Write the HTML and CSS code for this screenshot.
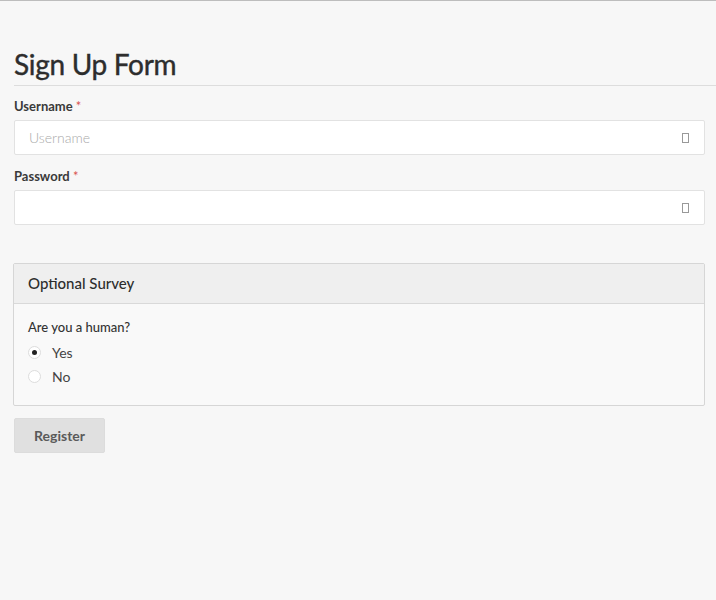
FILE: index.html
```html
<!DOCTYPE html>
<html>
<head>
<meta charset="utf-8">
<link rel="stylesheet" href="styles.css">
</head>
<body>
<div class="page">
  <h1 class="title">Sign Up Form</h1>
  <div class="field">
    <label class="label">Username <span class="req">*</span></label>
    <div class="input"><span class="ph">Username</span><span class="icon"></span></div>
  </div>
  <div class="field">
    <label class="label">Password <span class="req">*</span></label>
    <div class="input"><span class="ph"></span><span class="icon"></span></div>
  </div>
  <div class="panel">
    <div class="panel-head">Optional Survey</div>
    <div class="panel-body">
      <div class="question">Are you a human?</div>
      <div class="radio"><span class="dot checked"></span><span>Yes</span></div>
      <div class="radio"><span class="dot"></span><span>No</span></div>
    </div>
  </div>
  <button class="btn">Register</button>
</div>
</body>
</html>
```
FILE: styles.css
```css
html, body {
  margin: 0;
  padding: 0;
  background: #f7f7f7;
  font-family: Lato, "Liberation Sans", sans-serif;
  color: #333;
}
body {
  border-top: 1px solid #bdbdbd;
  height: 599px;
}
.page {
  padding: 44px 11px 0 14px;
}
.title {
  margin: 0 -11px 0 0;
  font-size: 28px;
  font-weight: 400;
  color: #2d2d2d;
  line-height: 36px;
  padding-top: 1px;
  padding-bottom: 3px;
  border-bottom: 1px solid #ddd;
  letter-spacing: -0.3px;
  -webkit-text-stroke: 0.4px #2d2d2d;
}
.field {
  margin-top: 12px;
}
.field + .field {
  margin-top: 13px;
}
.label {
  display: block;
  font-size: 13px;
  font-weight: 700;
  color: #3a3a3a;
  line-height: 16px;
  margin-bottom: 6px;
}
.req {
  color: #d9534f;
  font-weight: 400;
}
.input {
  height: 33px;
  background: #fff;
  border: 1px solid #e2e2e2;
  border-radius: 2px;
  display: flex;
  align-items: center;
  justify-content: space-between;
  padding: 0 15px 0 14px;
}
.ph {
  font-size: 14px;
  color: #aaa;
  font-weight: 300;
}
.icon {
  width: 5px;
  height: 8px;
  border: 1px solid #999;
}
.panel {
  margin-top: 38px;
  margin-left: -1px;
  border: 1px solid #d6d6d6;
  border-radius: 2px;
  background: #f9f9f9;
}
.panel-head {
  height: 39px;
  line-height: 39px;
  background: #efefef;
  border-bottom: 1px solid #d9d9d9;
  padding-left: 14px;
  font-size: 15px;
  font-weight: 500;
  color: #2d2d2d;
}
.panel-body {
  padding: 15px 14px 17px;
}
.question {
  font-size: 13px;
  color: #333;
  line-height: 16px;
  margin-bottom: 5px;
  font-weight: 500;
}
.radio {
  display: flex;
  align-items: center;
  height: 24px;
  font-size: 14px;
  color: #444;
}
.dot {
  width: 11px;
  height: 11px;
  border: 1px solid #ddd;
  border-radius: 50%;
  background: #fff;
  margin-right: 11px;
  position: relative;
}
.dot.checked::after {
  content: "";
  position: absolute;
  left: 3px;
  top: 3px;
  width: 5px;
  height: 5px;
  border-radius: 50%;
  background: #222;
}
.btn {
  margin-top: 12px;
  width: 91px;
  height: 35px;
  border: 1px solid #dcdcdc;
  border-radius: 2px;
  background: #e0e0e0;
  font-family: Lato, "Liberation Sans", sans-serif;
  font-size: 14px;
  font-weight: 700;
  color: #5a5a5a;
  padding: 0;
}
```
